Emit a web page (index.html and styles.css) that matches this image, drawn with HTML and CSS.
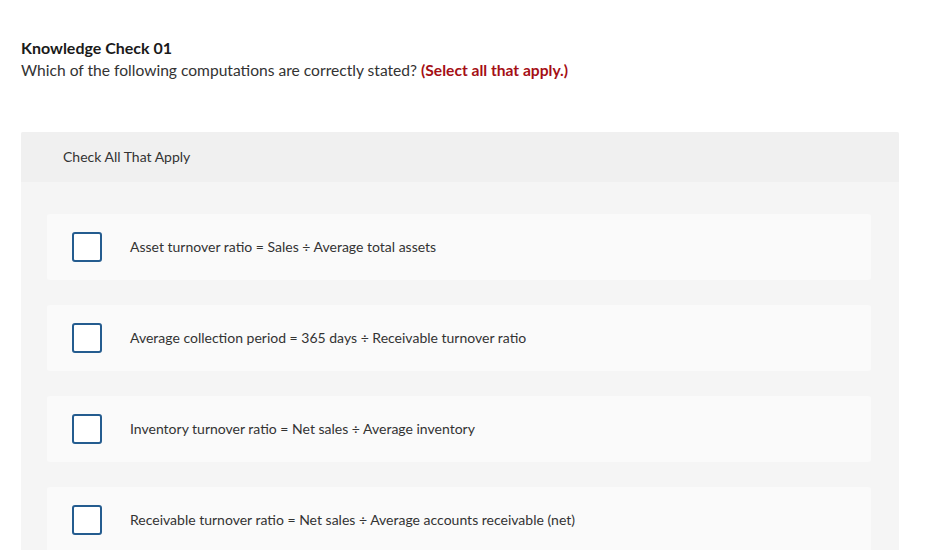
FILE: index.html
```html
<!DOCTYPE html>
<html>
<head>
<meta charset="utf-8">
<link rel="stylesheet" href="styles.css">
</head>
<body>
<div class="page">
  <div class="question">
    <h2 class="title">Knowledge Check 01</h2>
    <p class="prompt">Which of the following computations are correctly stated? <strong class="hint">(Select all that apply.)</strong></p>
  </div>
  <div class="panel">
    <div class="panel-head">Check All That Apply</div>
    <div class="panel-body">
      <label class="choice"><span class="box"></span><span class="choice-text">Asset turnover ratio = Sales ÷ Average total assets</span></label>
      <label class="choice"><span class="box"></span><span class="choice-text">Average collection period = 365 days ÷ Receivable turnover ratio</span></label>
      <label class="choice"><span class="box"></span><span class="choice-text">Inventory turnover ratio = Net sales ÷ Average inventory</span></label>
      <label class="choice"><span class="box"></span><span class="choice-text">Receivable turnover ratio = Net sales ÷ Average accounts receivable (net)</span></label>
    </div>
  </div>
</div>
</body>
</html>
```
FILE: styles.css
```css
* { box-sizing: border-box; }
html, body { margin: 0; padding: 0; background: #fff; }
body {
  font-family: Lato, "Open Sans", Arial, sans-serif;
  color: #222;
  overflow: hidden;
}
.page {
  padding: 38px 44px 0 21px;
}
.question { margin-bottom: 52px; }
.title {
  margin: 0;
  font-size: 16px;
  font-weight: 700;
  line-height: 20px;
  color: #1a1a1a;
}
.prompt {
  margin: 2px 0 0;
  font-size: 15.6px;
  line-height: 20px;
  color: #333;
}
.hint { color: #a50f15; font-weight: 700; }
.panel {
  width: 878px;
  background: #f5f5f5;
  border-radius: 2px 2px 0 0;
}
.panel-head {
  height: 50px;
  background: #f0f0f0;
  padding-left: 42px;
  padding-bottom: 1px;
  display: flex;
  align-items: center;
  font-size: 14px;
  color: #333;
  border-radius: 2px 2px 0 0;
}
.panel-body {
  padding: 32px 28px 40px 26px;
  display: flex;
  flex-direction: column;
  gap: 25px;
}
.choice {
  height: 66px;
  background: #fafafa;
  border-radius: 3px;
  display: flex;
  align-items: center;
  padding-left: 25px;
}
.box {
  width: 30px;
  height: 30px;
  border: 2px solid #245c8f;
  border-radius: 3px;
  background: #fff;
  flex: none;
}
.choice-text {
  margin-left: 28px;
  padding-bottom: 2px;
  font-size: 14px;
  color: #333;
}
```
